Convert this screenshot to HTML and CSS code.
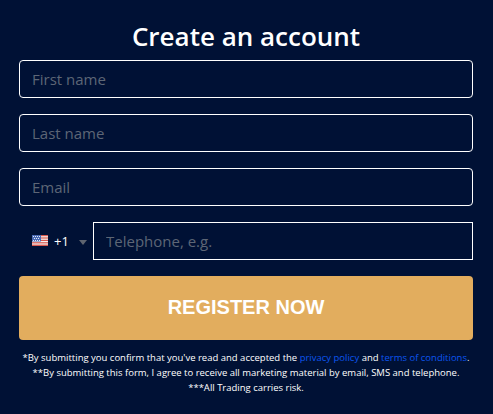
FILE: index.html
```html
<!DOCTYPE html>
<html lang="en">
  <head>
    <meta charset="UTF-8" />
    <meta name="viewport" content="width=device-width, initial-scale=1.0" />
    <title>Create an account</title>
    <link rel="stylesheet" href="styles.css">
  </head>
  <body>
    <form class="signup">
      <h1>Create an account</h1>
      <input class="field" type="text" placeholder="First name" />
      <input class="field" type="text" placeholder="Last name" />
      <input class="field" type="text" placeholder="Email" />
      <div class="phone">
        <div class="dial">
          <svg class="flag" width="16" height="11" viewBox="0 0 16 11">
            <rect width="16" height="11" fill="#f4f1ee" />
            <rect y="0" width="16" height="1.2" fill="#d9584f" />
            <rect y="2.4" width="16" height="1.2" fill="#d9584f" />
            <rect y="4.8" width="16" height="1.2" fill="#d9584f" />
            <rect y="7.2" width="16" height="1.2" fill="#d9584f" />
            <rect y="9.6" width="16" height="1.4" fill="#d9584f" />
            <rect width="9" height="6.5" fill="#4a6ab4" />
            <g fill="#dfe6f5">
              <rect x="1" y="1" width="1" height="1" />
              <rect x="3" y="1" width="1" height="1" />
              <rect x="5" y="1" width="1" height="1" />
              <rect x="7" y="1" width="1" height="1" />
              <rect x="2" y="3" width="1" height="1" />
              <rect x="4" y="3" width="1" height="1" />
              <rect x="6" y="3" width="1" height="1" />
              <rect x="1" y="5" width="1" height="1" />
              <rect x="3" y="5" width="1" height="1" />
              <rect x="5" y="5" width="1" height="1" />
              <rect x="7" y="5" width="1" height="1" />
            </g>
          </svg>
          <span class="code">+1</span>
          <span class="caret"></span>
        </div>
        <input class="tel" type="text" placeholder="Telephone, e.g." />
      </div>
      <button class="register" type="button">REGISTER NOW</button>
      <div class="legal">
        <p>*By submitting you confirm that you've read and accepted the <a href="#">privacy policy</a> and <a href="#">terms of conditions</a>.</p>
        <p>**By submitting this form, I agree to receive all marketing material by email, SMS and telephone.</p>
        <p>***All Trading carries risk.</p>
      </div>
    </form>
  </body>
</html>
```

FILE: styles.css
```css
body {
  margin: 0;
  padding: 0;
  background-color: #001135;
  font-family: "Open Sans", "Noto Sans", sans-serif;
  color: #fff;
}
.signup {
  display: flex;
  flex-direction: column;
  gap: 16px;
  padding: 18px 20px 0 19px;
}
h1 {
  margin: 0 0 -16px;
  height: 42px;
  font-size: 26px;
  line-height: 36px;
  font-weight: 600;
  text-align: center;
}
.field {
  box-sizing: border-box;
  width: 100%;
  height: 38px;
  padding: 0 12px;
  background: transparent;
  border: 1px solid #fff;
  border-radius: 4px;
  color: #fff;
  font-family: inherit;
  font-size: 15px;
}
input::placeholder {
  color: #5d6676;
  opacity: 1;
}
.phone {
  display: flex;
  height: 38px;
}
.dial {
  display: flex;
  align-items: center;
  width: 74px;
  padding-left: 13px;
  box-sizing: border-box;
  font-size: 13px;
}
.flag {
  margin-top: -2px;
}
.code {
  margin-left: 6px;
}
.caret {
  margin-left: 10px;
  margin-top: 2px;
  border-left: 4px solid transparent;
  border-right: 4px solid transparent;
  border-top: 5px solid #5f6570;
}
.tel {
  box-sizing: border-box;
  flex: 1;
  min-width: 0;
  padding: 0 12px;
  background: transparent;
  border: 1px solid #fff;
  border-radius: 0;
  color: #fff;
  font-family: inherit;
  font-size: 15px;
}
.register {
  height: 64px;
  padding: 0 0 2px;
  background-color: #e2ad5e;
  border: none;
  border-radius: 4px;
  color: #fff;
  font-family: "Liberation Sans", Arial, sans-serif;
  font-size: 20px;
  font-weight: bold;
  cursor: pointer;
}
.legal {
  margin-top: -6px;
  text-align: center;
  font-size: 9.5px;
  line-height: 15px;
  white-space: nowrap;
}
.legal p {
  margin: 0;
}
.legal a {
  color: #0d56f0;
  text-decoration: none;
}
```
